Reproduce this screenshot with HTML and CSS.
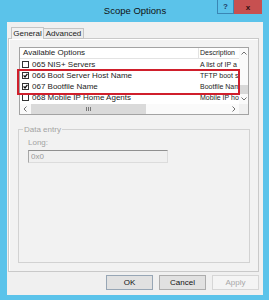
FILE: index.html
```html
<!DOCTYPE html>
<html lang="en">
<head>
    <meta charset="UTF-8">
    <meta name="viewport" content="width=device-width, initial-scale=1.0">
    <title>Scope Options</title>
    <link rel="stylesheet" href="styles.css">
</head>
<body>
    <div class="window">
        <div class="titlebar">
            <span></span>
            <div class="title">Scope Options</div>
            <div class="caption-buttons">
                <span class="cap-btn help">?</span>
                <span class="cap-btn close">x</span>
            </div>
        </div>
        <div class="client">
            <div class="tabs">
                <div class="tab active">General</div>
                <div class="tab">Advanced</div>
            </div>
            <div class="panel">
                <div class="listbox">
                    <div class="list-main">
                        <div class="list-header">
                            <div class="head-name">Available Options</div>
                            <div class="head-desc">Description</div>
                        </div>
                        <div class="row">
                            <span class="check"></span>
                            <span class="col-name">065 NIS+ Servers</span>
                            <span class="col-desc">A list of IP a</span>
                        </div>
                        <div class="row">
                            <span class="check checked"><svg viewBox="0 0 5 5"><path d="M0.6 2.4 L2 3.9 L4.4 0.9"/></svg></span>
                            <span class="col-name">066 Boot Server Host Name</span>
                            <span class="col-desc">TFTP boot s</span>
                        </div>
                        <div class="row">
                            <span class="check checked"><svg viewBox="0 0 5 5"><path d="M0.6 2.4 L2 3.9 L4.4 0.9"/></svg></span>
                            <span class="col-name">067 Bootfile Name</span>
                            <span class="col-desc">Bootfile Nam</span>
                        </div>
                        <div class="row">
                            <span class="check"></span>
                            <span class="col-name">068 Mobile IP Home Agents</span>
                            <span class="col-desc">Mobile IP ho</span>
                        </div>
                    </div>
                    <div class="vscroll">
                        <div class="arrow"><svg viewBox="0 0 6 4"><path d="M0.5 3.5 L3 1 L5.5 3.5"/></svg></div>
                        <div class="vtrack"><div class="vthumb"></div></div>
                        <div class="arrow"><svg viewBox="0 0 6 4"><path d="M0.5 0.5 L3 3 L5.5 0.5"/></svg></div>
                    </div>
                    <div class="hscroll">
                        <div class="arrow"><svg viewBox="0 0 4 6"><path d="M3.5 0.5 L1 3 L3.5 5.5"/></svg></div>
                        <div class="hthumb"><svg viewBox="0 0 5 4"><path d="M0.5 0 V4 M2.5 0 V4 M4.5 0 V4"/></svg></div>
                        <div class="htrack"></div>
                        <div class="arrow"><svg viewBox="0 0 4 6"><path d="M0.5 0.5 L3 3 L0.5 5.5"/></svg></div>
                    </div>
                    <div class="corner"></div>
                    <div class="highlight"></div>
                </div>
                <fieldset class="group">
                    <legend>Data entry</legend>
                    <div class="group-body">
                        <label for="longValue">Long:</label>
                        <input type="text" id="longValue" value="0x0" disabled>
                    </div>
                </fieldset>
            </div>
            <div class="buttons">
                <button class="btn default">OK</button>
                <button class="btn">Cancel</button>
                <button class="btn" disabled>Apply</button>
            </div>
        </div>
    </div>
</body>
</html>
```

FILE: styles.css
```css
* {
    box-sizing: border-box;
}

body {
    margin: 0;
    font-family: "Liberation Sans", Arial, sans-serif;
}

.window {
    width: 269px;
    height: 300px;
    background-color: #5bc3ea;
    padding: 0 6px 5px 7px;
    display: flex;
    flex-direction: column;
}

.titlebar {
    height: 22px;
    display: grid;
    grid-template-columns: 1fr auto 1fr;
    align-items: start;
}

.title {
    font-size: 9.5px;
    line-height: 22px;
    color: #111;
}

.caption-buttons {
    justify-self: end;
    display: flex;
    margin-right: 1px;
}

.cap-btn {
    height: 14px;
    display: flex;
    align-items: center;
    justify-content: center;
    font-size: 8px;
    font-weight: bold;
}

.help {
    width: 17px;
    border: 1px solid #3a86b4;
    border-top: none;
    color: #1d3d63;
}

.close {
    width: 28px;
    background-color: #c75050;
    color: #2e1010;
}

.client {
    flex: 1;
    background-color: #f0f0f0;
    padding: 5px 4px 5px 1px;
    display: flex;
    flex-direction: column;
}

.tabs {
    height: 12px;
    margin-bottom: -1px;
    padding-left: 3px;
    display: flex;
    align-items: flex-end;
    position: relative;
    z-index: 1;
}

.tab {
    height: 11px;
    width: 40px;
    border: 1px solid #c4c4c4;
    border-left: none;
    background-color: #ececec;
    font-size: 8px;
    color: #222;
    display: flex;
    align-items: center;
    justify-content: center;
}

.tab.active {
    width: 33px;
    height: 12px;
    border-left: 1px solid #c4c4c4;
    border-bottom: none;
    background-color: #f2f2f2;
}

.panel {
    height: 234px;
    border: 1px solid #c9c9c9;
    box-shadow: inset 1px 1px 0 #fff;
    background-color: #f2f2f2;
    padding: 8px 9px 8px 10px;
    display: flex;
    flex-direction: column;
}

.listbox {
    position: relative;
    height: 68px;
    border: 1px solid #a3a3a3;
    background-color: #fff;
    display: grid;
    grid-template-columns: 1fr 9px;
    grid-template-rows: 56px 10px;
}

.list-main {
    overflow: hidden;
    font-size: 8px;
    color: #1c1c1c;
    white-space: nowrap;
}

.list-header {
    height: 11px;
    display: flex;
    border-bottom: 1px solid #e3e3e3;
}

.head-name {
    width: 179px;
    padding-left: 3px;
    border-right: 1px solid #e3e3e3;
    line-height: 10px;
}

.head-desc {
    flex: 1;
    padding-left: 1px;
    font-size: 7px;
    line-height: 10px;
    overflow: hidden;
}

.row {
    height: 11px;
    display: flex;
    align-items: center;
    padding-left: 2px;
}

.check {
    width: 7px;
    height: 7px;
    border: 1px solid #333;
    background-color: #fff;
    margin-right: 3px;
    display: flex;
}

.check svg {
    width: 5px;
    height: 5px;
    fill: none;
    stroke: #111;
    stroke-width: 1.3;
}

.col-name {
    width: 167px;
}

.col-desc {
    flex: 1;
    padding-left: 1px;
    font-size: 7px;
    overflow: hidden;
}

.arrow {
    display: flex;
    align-items: center;
    justify-content: center;
}

.arrow svg {
    fill: none;
    stroke: #707070;
    stroke-width: 1;
}

.vscroll {
    background-color: #fafafa;
    display: flex;
    flex-direction: column;
}

.vscroll .arrow {
    height: 10px;
}

.vscroll .arrow svg {
    width: 6px;
    height: 4px;
}

.vtrack {
    flex: 1;
    display: flex;
    flex-direction: column;
}

.vthumb {
    margin-top: auto;
    height: 9px;
    background-color: #d8d8d8;
}

.hscroll {
    background-color: #fafafa;
    display: flex;
}

.hscroll .arrow {
    width: 10px;
}

.hscroll .arrow svg {
    width: 4px;
    height: 6px;
}

.hthumb {
    width: 115px;
    margin-left: 1px;
    background-color: #dadada;
    display: flex;
    align-items: center;
    justify-content: center;
}

.hthumb svg {
    width: 5px;
    height: 4px;
    stroke: #777;
    stroke-width: 1;
}

.htrack {
    flex: 1;
}

.corner {
    background-color: #f0f0f0;
}

.highlight {
    position: absolute;
    left: -3px;
    top: 21px;
    width: 223px;
    height: 26px;
    border: 2px solid #d01f2c;
}

.group {
    flex: 1;
    margin: 10px -1px 0 -1px;
    padding: 0 4px;
    border: 1px solid #d2d2d2;
    min-width: 0;
}

.group legend {
    padding: 0 1px;
    font-size: 8px;
    line-height: 9px;
    color: #a2a2a2;
}

.group-body {
    padding: 4px 0 0 5px;
    display: flex;
    flex-direction: column;
    align-items: flex-start;
}

label {
    font-size: 8px;
    line-height: 9px;
    color: #a2a2a2;
    margin-bottom: 3px;
}

input {
    width: 140px;
    height: 13px;
    padding: 0 2px;
    border: 1px solid #dcdcdc;
    border-top-color: #909090;
    border-left-color: #a8a8a8;
    background-color: #f0f0f0;
    font-family: "Liberation Sans", Arial, sans-serif;
    font-size: 8px;
    color: #9a9a9a;
}

.buttons {
    height: 15px;
    margin-top: 3px;
    display: flex;
    justify-content: flex-end;
    gap: 6px;
}

.btn {
    width: 47px;
    height: 15px;
    padding: 0;
    border: 1px solid #adadad;
    background-color: #e1e1e1;
    font-family: "Liberation Sans", Arial, sans-serif;
    font-size: 8px;
    color: #111;
}

.btn.default {
    border-color: #97a6b5;
}

.btn:disabled {
    background-color: #f4f4f4;
    border-color: #d6d6d6;
    color: #a8a8a8;
}
```
